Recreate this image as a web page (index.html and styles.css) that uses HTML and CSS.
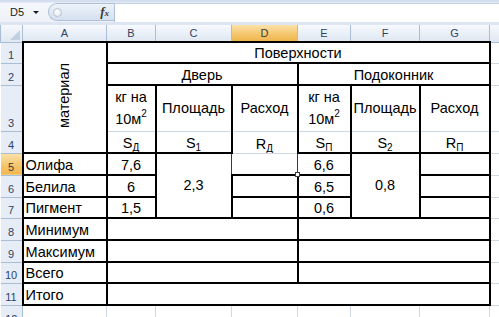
FILE: index.html
```html
<!DOCTYPE html>
<html>
<head>
<meta charset="utf-8">
<link rel="stylesheet" href="styles.css">
</head>
<body>
<div class="window">
  <div class="fbar">
    <div class="namebox"><span class="ref">D5</span><span class="caret"></span></div>
    <div class="pill"><span class="knob"></span><span class="fx">f<span class="fx-x">x</span></span></div>
    <div class="finput"></div>
  </div>
  <div class="gap"></div>
  <div class="sheet-wrap">
    <table class="sheet">
      <colgroup>
        <col class="c-hdr"><col class="c-a"><col class="c-b"><col class="c-c"><col class="c-d"><col class="c-e"><col class="c-f"><col class="c-g"><col class="c-h">
      </colgroup>
      <tr class="hrow">
        <th class="corner"><span class="tri"></span></th>
        <th>A</th><th>B</th><th>C</th><th class="sel">D</th><th>E</th><th>F</th><th>G</th><th></th>
      </tr>
      <tr class="r1">
        <th class="rh">1</th>
        <td rowspan="4" class="b vert"><span class="vtext">материал</span></td>
        <td colspan="6" class="b ctr">Поверхности</td>
        <td></td>
      </tr>
      <tr class="r2">
        <th class="rh">2</th>
        <td colspan="3" class="b ctr">Дверь</td>
        <td colspan="3" class="b ctr">Подоконник</td>
        <td></td>
      </tr>
      <tr class="r3">
        <th class="rh">3</th>
        <td class="top3 ctr mid wrap">кг на<br>10м<sup>2</sup></td>
        <td class="top3 ctr mid">Площадь</td>
        <td class="top3 ctr mid">Расход</td>
        <td class="top3 ctr mid wrap">кг на<br>10м<sup>2</sup></td>
        <td class="top3 ctr mid">Площадь</td>
        <td class="top3 ctr mid">Расход</td>
        <td></td>
      </tr>
      <tr class="r4">
        <th class="rh">4</th>
        <td class="bot4 ctr">S<sub>Д</sub></td>
        <td class="bot4 ctr">S<sub>1</sub></td>
        <td class="side4 ctr">R<sub>Д</sub></td>
        <td class="bot4 ctr">S<sub>П</sub></td>
        <td class="bot4 ctr">S<sub>2</sub></td>
        <td class="bot4 ctr">R<sub>П</sub></td>
        <td></td>
      </tr>
      <tr class="r5">
        <th class="rh rsel">5</th>
        <td class="b">Олифа</td>
        <td class="b ctr">7,6</td>
        <td rowspan="3" class="b noright ctr mid">2,3</td>
        <td class="cur"><span class="handle"></span></td>
        <td class="b thinleft ctr">6,6</td>
        <td rowspan="3" class="b ctr mid">0,8</td>
        <td class="b"></td>
        <td></td>
      </tr>
      <tr class="r6">
        <th class="rh">6</th>
        <td class="b">Белила</td>
        <td class="b ctr">6</td>
        <td class="b"></td>
        <td class="b ctr">6,5</td>
        <td class="b"></td>
        <td></td>
      </tr>
      <tr class="r7">
        <th class="rh">7</th>
        <td class="b">Пигмент</td>
        <td class="b ctr">1,5</td>
        <td class="b"></td>
        <td class="b ctr">0,6</td>
        <td class="b"></td>
        <td></td>
      </tr>
      <tr class="r8">
        <th class="rh">8</th>
        <td class="b">Минимум</td>
        <td colspan="3" class="b"></td>
        <td colspan="3" class="b"></td>
        <td></td>
      </tr>
      <tr class="r9">
        <th class="rh">9</th>
        <td class="b">Максимум</td>
        <td colspan="3" class="b"></td>
        <td colspan="3" class="b"></td>
        <td></td>
      </tr>
      <tr class="r10">
        <th class="rh">10</th>
        <td class="b">Всего</td>
        <td colspan="3" class="b"></td>
        <td colspan="3" class="b"></td>
        <td></td>
      </tr>
      <tr class="r11">
        <th class="rh">11</th>
        <td class="b">Итого</td>
        <td colspan="6" class="b"></td>
        <td></td>
      </tr>
      <tr class="r12">
        <th class="rh">12</th>
        <td></td><td></td><td></td><td></td><td></td><td></td><td></td><td></td>
      </tr>
    </table>
  </div>
</div>
</body>
</html>
```

FILE: styles.css
```css
* { box-sizing: border-box; }

body {
  margin: 0;
  background: #ffffff;
  font-family: "Liberation Sans", Arial, sans-serif;
}

.window {
  width: 499px;
  height: 317px;
  overflow: hidden;
  background: #ffffff;
}

/* ---------- formula bar ---------- */
.fbar {
  height: 22px;
  display: flex;
  align-items: center;
  background: linear-gradient(#d3deee 0, #d3deee 2px, #f4f7fb 3px, #eef2f8 100%);
}

.namebox {
  width: 48px;
  height: 19px;
  margin-top: 2px;
  display: flex;
  align-items: center;
  padding-left: 10px;
  gap: 9px;
}

.ref {
  font-size: 11px;
  color: #1d1d1d;
}

.caret {
  width: 0;
  height: 0;
  border-left: 3px solid transparent;
  border-right: 3px solid transparent;
  border-top: 3px solid #1a1a1a;
}

.pill {
  width: 66px;
  height: 18px;
  margin-top: 2px;
  display: flex;
  align-items: center;
  border: 1px solid #aebfd6;
  border-right: none;
  border-radius: 9px 0 0 9px;
  background: linear-gradient(#eef3fa, #d4e0ef);
  padding-left: 4px;
}

.knob {
  width: 9px;
  height: 9px;
  border-radius: 50%;
  border: 1px solid #b9c3d1;
  background: radial-gradient(circle at 40% 40%, #ffffff, #dfe5ee);
}

.fx {
  margin-left: auto;
  margin-right: 5px;
  font-family: "Liberation Serif", serif;
  font-style: italic;
  font-weight: bold;
  font-size: 13px;
  color: #3a3a3a;
}

.fx-x {
  font-size: 9px;
}

.finput {
  flex: 1;
  height: 19px;
  margin-top: 2px;
  background: #ffffff;
  border-top: 1px solid #c3cfdf;
  border-left: 1px solid #aebfd6;
}

.gap {
  height: 3px;
  background: #dce5f1;
}

/* ---------- sheet ---------- */
.sheet {
  border-collapse: collapse;
  table-layout: fixed;
  width: 520px;
  font-size: 14.5px;
  color: #000;
}

.c-hdr { width: 22px; }
.c-a { width: 84px; }
.c-b { width: 49px; }
.c-c { width: 76px; }
.c-d { width: 66px; }
.c-e { width: 53px; }
.c-f { width: 69px; }
.c-g { width: 70px; }
.c-h { width: 31px; }

.sheet td {
  border: 1px solid #d0d7e5;
  padding: 0 2px;
  line-height: 17px;
  vertical-align: bottom;
  white-space: nowrap;
  overflow: hidden;
}

.sheet th {
  font-weight: normal;
  font-size: 11px;
  color: #2f4463;
  padding: 0;
  overflow: hidden;
}

.hrow { height: 17px; }
.hrow th {
  border: 1px solid #a9bdd5;
  border-top: none;
  background: linear-gradient(#f6f9fd, #dfe7f2);
  vertical-align: middle;
  text-align: center;
}

.hrow th.sel {
  background: linear-gradient(#fbe2a8, #f4c46a 60%, #f0b54e);
  color: #3b3b3b;
}

.corner {
  position: relative;
}

.tri {
  position: absolute;
  right: 2px;
  bottom: 2px;
  width: 0;
  height: 0;
  border-left: 10px solid transparent;
  border-bottom: 10px solid #c2cfe0;
}

.rh {
  border: 1px solid #a9bdd5;
  border-left: none;
  background: #e6edf7;
  vertical-align: bottom;
  text-align: center;
  line-height: 15px;
}

.rh.rsel {
  background: linear-gradient(#fbe2a8, #f4c46a 60%, #f0b54e);
  color: #3b3b3b;
}

.r1 { height: 21px; }
.r2 { height: 22px; }
.r3 { height: 46px; }
.r4 { height: 22px; }
.r5 { height: 22px; }
.r6 { height: 22px; }
.r7 { height: 21px; }
.r8 { height: 22px; }
.r9 { height: 22px; }
.r10 { height: 21px; }
.r11 { height: 22px; }
.r12 { height: 22px; }

.sheet td.b { border: 2px solid #000; }

.sheet td.top3 {
  border-top: 2px solid #000;
  border-left: 2px solid #000;
  border-right: 2px solid #000;
}

.sheet td.bot4 {
  border-bottom: 2px solid #000;
  border-left: 2px solid #000;
  border-right: 2px solid #000;
}

.sheet td.side4 {
  border-left: 2px solid #000;
  border-right: 2px solid #000;
}

.sheet td.noright { border-right-style: none; }

.sheet td.cur {
  position: relative;
  border-left: 1px solid #3a3a3a;
  border-right: 1px solid #3a3a3a;
  border-bottom: 1px solid #3a3a3a;
  overflow: visible;
}

.sheet td.thinleft { border-left: 1px solid #3a3a3a; }

.handle {
  position: absolute;
  right: -3px;
  bottom: -3px;
  width: 5px;
  height: 5px;
  background: #ffffff;
  border: 1px solid #3a3a3a;
}

.ctr { text-align: center; }
.sheet td.mid { vertical-align: middle; }
.sheet td.wrap { line-height: 22px; white-space: normal; }

sup {
  font-size: 10px;
  vertical-align: 7px;
  line-height: 0;
}

sub {
  font-size: 10px;
  vertical-align: -3px;
  line-height: 0;
}

.sheet td.vert {
  vertical-align: middle;
  text-align: center;
  padding: 0;
}

.vtext {
  display: inline-block;
  writing-mode: vertical-rl;
  transform: rotate(180deg);
  line-height: 17px;
}
```
